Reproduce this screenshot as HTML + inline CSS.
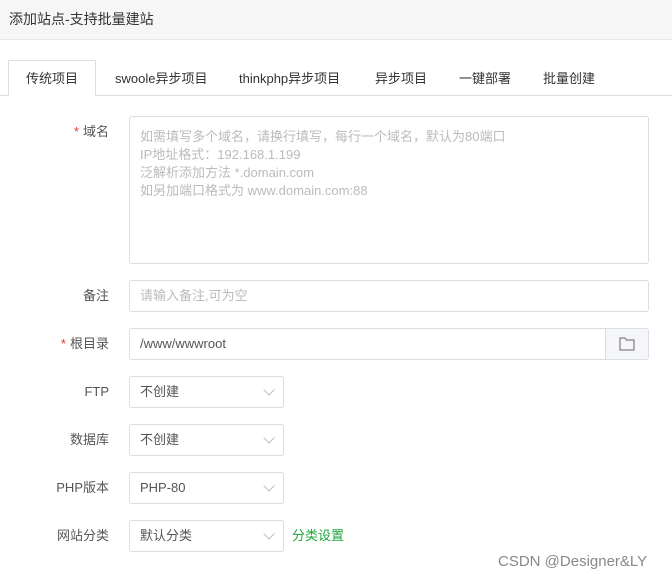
<!DOCTYPE html>
<html><head><meta charset="utf-8"><style>
*{box-sizing:border-box;margin:0;padding:0}
body{width:672px;height:580px;background:#fff;font-family:"Liberation Sans","Noto Sans CJK SC",sans-serif;font-size:13px;color:#555;position:relative;overflow:hidden}
.hd{height:40px;background:#f6f6f6;border-bottom:1px solid #e8e8e8;line-height:38px;padding-left:9px;font-size:14px;color:#333}
.tabs{position:absolute;top:95px;left:0;width:672px;border-top:1px solid #ddd}
.tab{position:absolute;top:66px;height:30px;line-height:26px;color:#333;font-size:13px}
.act{position:absolute;left:8px;top:60px;width:88px;height:36px;border:1px solid #ddd;border-bottom:1px solid #fff;background:#fff;text-align:center;line-height:36px;color:#333;z-index:2}
.lbl{position:absolute;right:563px;color:#555;text-align:right;white-space:nowrap;line-height:16px}
.lbl i{color:#e33;font-style:normal;margin-right:4px}
.box{position:absolute;left:129px;border:1px solid #ddd;border-radius:3px;background:#fff;padding-left:10px;color:#555}
.ph{color:#bbb}
.sel{width:155px;height:32px;line-height:30px}
.sel:after{content:"";position:absolute;right:10px;top:9px;width:7px;height:7px;border-right:1px solid #bbb;border-bottom:1px solid #bbb;transform:rotate(45deg)}
</style></head><body>
<div class="hd">添加站点-支持批量建站</div>
<div class="tabs"></div>
<div class="act">传统项目</div>
<div class="tab" style="left:115px">swoole异步项目</div>
<div class="tab" style="left:239px">thinkphp异步项目</div>
<div class="tab" style="left:375px">异步项目</div>
<div class="tab" style="left:459px">一键部署</div>
<div class="tab" style="left:543px">批量创建</div>

<div class="lbl" style="top:124px"><i>*</i>域名</div>
<div class="box" style="top:116px;width:520px;height:148px;padding-top:11px;line-height:18px;color:#bbb">如需填写多个域名，请换行填写，每行一个域名，默认为80端口<br>IP地址格式：192.168.1.199<br>泛解析添加方法 *.domain.com<br>如另加端口格式为 www.domain.com:88</div>

<div class="lbl" style="top:288px">备注</div>
<div class="box ph" style="top:280px;width:520px;height:32px;line-height:30px">请输入备注,可为空</div>

<div class="lbl" style="top:336px"><i>*</i>根目录</div>
<div class="box" style="top:328px;width:520px;height:32px;line-height:30px">/www/wwwroot
<div style="position:absolute;right:0;top:0;width:43px;height:30px;background:#f5f6fa;border-left:1px solid #ddd">
<svg width="16" height="14" style="position:absolute;left:13px;top:8px" viewBox="0 0 16 14"><path d="M1 1h5l1.5 2H15v10H1z" fill="none" stroke="#666" stroke-width="1"/></svg></div></div>

<div class="lbl" style="top:384px">FTP</div>
<div class="box sel" style="top:376px">不创建</div>
<div class="lbl" style="top:432px">数据库</div>
<div class="box sel" style="top:424px">不创建</div>
<div class="lbl" style="top:480px">PHP版本</div>
<div class="box sel" style="top:472px">PHP-80</div>
<div class="lbl" style="top:528px">网站分类</div>
<div class="box sel" style="top:520px">默认分类</div>
<div style="position:absolute;left:292px;top:528px;color:#20a53a;line-height:16px">分类设置</div>
<div style="position:absolute;left:498px;top:553px;font-size:15px;color:#888">CSDN @Designer&amp;LY</div>
</body></html>
